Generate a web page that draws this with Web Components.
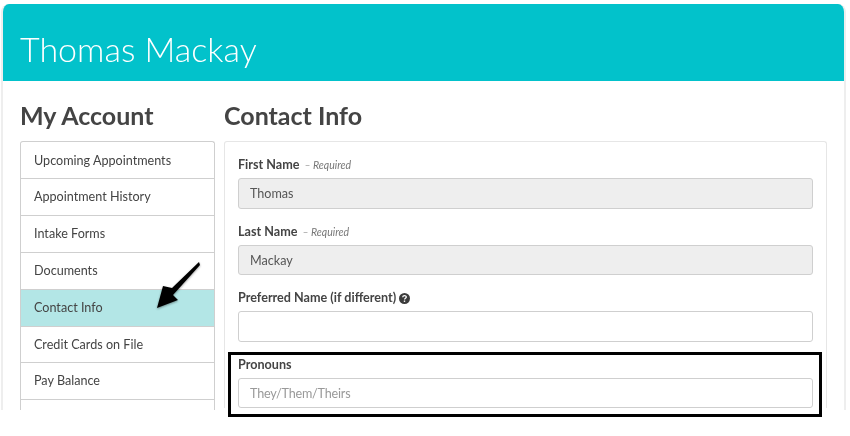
<!DOCTYPE html>
<html>
<head>
<meta charset="utf-8">
<title>Contact Info</title>
<style>
html, body { margin: 0; background: #fff; }
body { width: 850px; height: 436px; overflow: hidden; font-family: "Lato", "Liberation Sans", sans-serif; color: #444; }
</style>
</head>
<body>
<account-page>
  <span slot="name">Thomas Mackay</span>
  <side-nav slot="nav" heading="My Account">
    <nav-item>Upcoming Appointments</nav-item>
    <nav-item>Appointment History</nav-item>
    <nav-item>Intake Forms</nav-item>
    <nav-item>Documents</nav-item>
    <nav-item active>Contact Info</nav-item>
    <nav-item>Credit Cards on File</nav-item>
    <nav-item>Pay Balance</nav-item>
    <nav-item></nav-item>
  </side-nav>
  <contact-form slot="main" heading="Contact Info">
    <form-field label="First Name" required value="Thomas" disabled></form-field>
    <form-field label="Last Name" required value="Mackay" disabled></form-field>
    <form-field label="Preferred Name (if different)" help></form-field>
    <form-field label="Pronouns" placeholder="They/Them/Theirs"></form-field>
  </contact-form>
</account-page>

<script>
class accountPage extends HTMLElement {
    constructor() {
        super();
        this.shadow = this.attachShadow({ mode: 'open' });
    }

    connectedCallback() {
        this.shadow.innerHTML =
        `
        <style>
        :host { display: block; position: relative; width: 850px; height: 436px; box-sizing: border-box; padding: 4px 0 0 1px; filter: blur(0.3px); }
        .shell {
            width: 845px;
            height: 406px;
            box-sizing: border-box;
            border-right: 2px solid #eeeeee;
            border-left: 2px solid #eeeeee;
            border-radius: 8px 8px 0 0;
            overflow: hidden;
            background: #fff;
        }
        .banner {
            height: 77px;
            margin: 0 -2px;
            box-sizing: border-box;
            padding: 23px 0 0 19px;
            background: #02c2cb;
            color: #fff;
            font: 300 34px/44px "Lato", sans-serif;
        }
        .body {
            display: flex;
            gap: 9px;
            padding: 16px 0 0 17px;
        }
        .box {
            position: absolute;
            left: 228px;
            top: 352px;
            width: 594px;
            height: 65px;
            box-sizing: border-box;
            border: 3px solid #000;
        }
        svg { position: absolute; left: 140px; top: 255px; filter: drop-shadow(0 1px 1px rgba(0,0,0,.4)); }
        </style>
        <div class="shell">
            <div class="banner"><slot name="name"></slot></div>
            <div class="body">
                <slot name="nav"></slot>
                <slot name="main"></slot>
            </div>
        </div>
        <div class="box"></div>
        <svg width="80" height="60" viewBox="0 0 80 60">
            <path d="M59 7 L32 33 L23 31 L17 53 L38 45 L33 40 L60 10 Z" fill="#000"/>
        </svg>
        `;
    }
}

class sideNav extends HTMLElement {
    constructor() {
        super();
        this.shadow = this.attachShadow({ mode: 'open' });
    }

    connectedCallback() {
        this.shadow.innerHTML =
        `
        <style>
        :host { display: block; width: 195px; flex: none; }
        h2 { margin: 0 0 8px; font: 700 25px/36px "Lato", sans-serif; color: #444; }
        .list {
            padding-top: 0.7px;
            border: 1px solid #cfcfcf;
            border-bottom: 0;
            border-radius: 3px 3px 0 0;
            overflow: hidden;
        }
        </style>
        <h2>${this.getAttribute('heading')}</h2>
        <div class="list"><slot></slot></div>
        `;
    }
}

class navItem extends HTMLElement {
    constructor() {
        super();
        this.shadow = this.attachShadow({ mode: 'open' });
    }

    connectedCallback() {
        this.shadow.innerHTML =
        `
        <style>
        :host {
            display: block;
            height: 36.8px;
            box-sizing: border-box;
            padding: 0 13px;
            border-bottom: 1px solid #cfcfcf;
            font: 400 12.6px/35.6px "Lato", sans-serif;
            color: #444;
            background: #fff;
        }
        :host([active]) { background: #b3e6e6; }
        </style>
        <slot></slot>
        `;
    }
}

class contactForm extends HTMLElement {
    constructor() {
        super();
        this.shadow = this.attachShadow({ mode: 'open' });
    }

    connectedCallback() {
        this.shadow.innerHTML =
        `
        <style>
        :host { display: block; width: 603px; flex: none; }
        h2 { margin: 0 0 8px; font: 700 25px/36px "Lato", sans-serif; color: #444; }
        .panel {
            display: flex;
            flex-direction: column;
            gap: 12px;
            padding: 12px 13px 0;
            border: 1px solid #e6e6e6;
            border-bottom: 0;
            border-radius: 3px 3px 0 0;
        }
        </style>
        <h2>${this.getAttribute('heading')}</h2>
        <div class="panel"><slot></slot></div>
        `;
    }
}

class formField extends HTMLElement {
    constructor() {
        super();
        this.shadow = this.attachShadow({ mode: 'open' });
    }

    connectedCallback() {
        const required = this.hasAttribute('required') ? '<em>– Required</em>' : '';
        const help = this.hasAttribute('help') ? `
            <svg width="11" height="11" viewBox="0 0 11 11">
                <circle cx="5.5" cy="5.5" r="5.5" fill="#3c3c3c"/>
                <path d="M3.7 4.2 C3.8 2.2 7.3 2.2 7.3 4.1 C7.3 5.3 5.5 5.3 5.5 6.6" fill="none" stroke="#fff" stroke-width="1.3"/>
                <rect x="4.8" y="7.5" width="1.4" height="1.4" fill="#fff"/>
            </svg>` : '';
        const value = this.getAttribute('value') || '';
        const placeholder = this.getAttribute('placeholder') || '';
        this.shadow.innerHTML =
        `
        <style>
        :host { display: block; }
        label {
            display: flex;
            align-items: center;
            gap: 3px;
            height: 22px;
            font: 700 12.6px/22px "Lato", sans-serif;
            color: #444;
        }
        em { margin-left: 2px; font: italic 400 10.5px/22px "Lato", sans-serif; color: #777; }
        .input {
            height: 30.6px;
            margin-top: 2px;
            box-sizing: border-box;
            padding: 0 11px;
            border: 1px solid #cfcfcf;
            border-radius: 3px;
            font: 400 12.6px/30px "Lato", sans-serif;
            color: #555;
            background: #fff;
        }
        .input.off { background: #eeeeee; }
        .input i { font-style: normal; color: #999; letter-spacing: -0.2px; }
        </style>
        <label>${this.getAttribute('label')}${required}${help}</label>
        <div class="input ${this.hasAttribute('disabled') ? 'off' : ''}">${value}<i>${placeholder}</i></div>
        `;
    }
}

customElements.define('account-page', accountPage);
customElements.define('side-nav', sideNav);
customElements.define('nav-item', navItem);
customElements.define('contact-form', contactForm);
customElements.define('form-field', formField);
</script>
</body>
</html>
